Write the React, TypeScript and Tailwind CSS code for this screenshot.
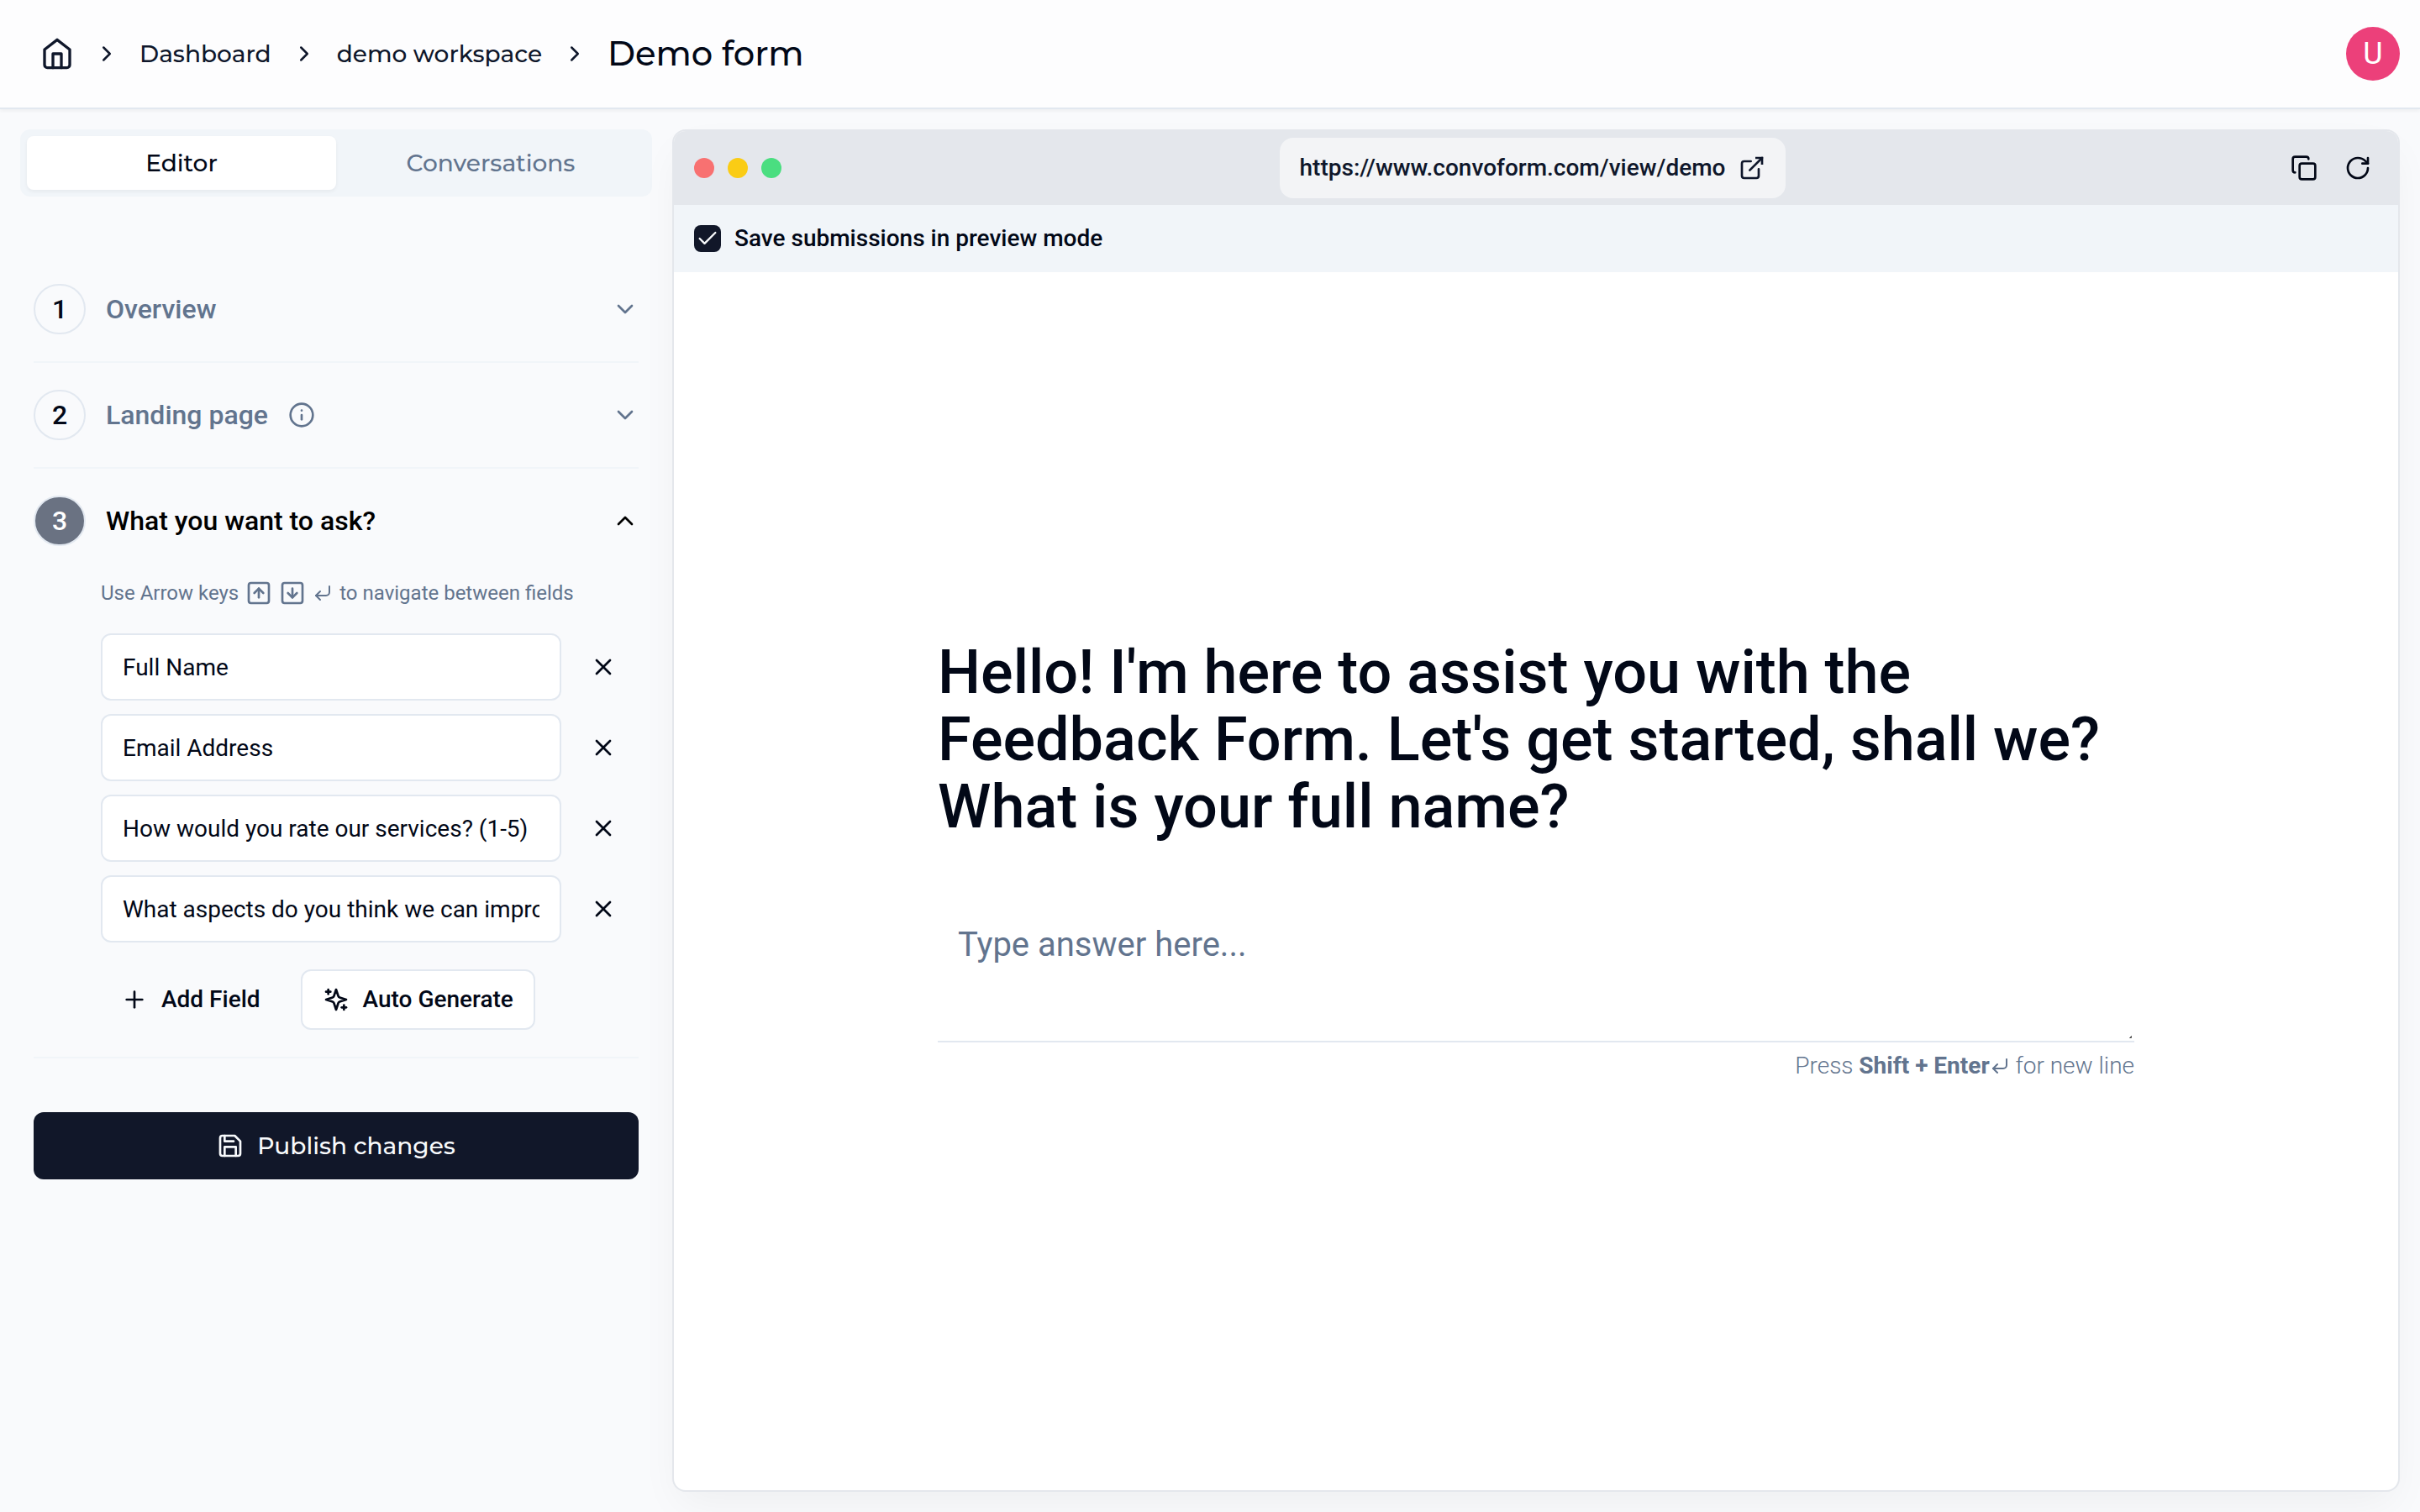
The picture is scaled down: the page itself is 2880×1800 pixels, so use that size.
import React, { useState } from "react";
import {
  ChevronDown,
  ChevronRight,
  ChevronUp,
  Check,
  Copy,
  CornerDownLeft,
  Info,
  Plus,
  RotateCw,
  SquareArrowDown,
  SquareArrowUp,
  X,
} from "lucide-react";

const display = "font-[Montserrat,Inter,sans-serif]";

function HomeIcon() {
  return (
    <svg viewBox="0 0 24 24" className="size-10" fill="none" stroke="currentColor" strokeWidth="2" strokeLinecap="round" strokeLinejoin="round" aria-hidden="true">
      <path d="m3 9 9-7 9 7v11a2 2 0 0 1-2 2H5a2 2 0 0 1-2-2z" />
      <polyline points="9 22 9 12 15 12 15 22" />
    </svg>
  );
}

function SparklesIcon() {
  return (
    <svg viewBox="0 0 24 24" className="size-8" fill="none" stroke="currentColor" strokeWidth="2" strokeLinecap="round" strokeLinejoin="round" aria-hidden="true">
      <path d="m12 3-1.912 5.813a2 2 0 0 1-1.275 1.275L3 12l5.813 1.912a2 2 0 0 1 1.275 1.275L12 21l1.912-5.813a2 2 0 0 1 1.275-1.275L21 12l-5.813-1.912a2 2 0 0 1-1.275-1.275L12 3Z" />
      <path d="M5 3v4" />
      <path d="M19 17v4" />
      <path d="M3 5h4" />
      <path d="M17 19h4" />
    </svg>
  );
}

function SaveIcon() {
  return (
    <svg viewBox="0 0 24 24" className="size-8" fill="none" stroke="currentColor" strokeWidth="2" strokeLinecap="round" strokeLinejoin="round" aria-hidden="true">
      <path d="M19 21H5a2 2 0 0 1-2-2V5a2 2 0 0 1 2-2h11l5 5v11a2 2 0 0 1-2 2z" />
      <polyline points="17 21 17 13 7 13 7 21" />
      <polyline points="7 3 7 8 15 8" />
    </svg>
  );
}

function OpenIcon() {
  return (
    <svg viewBox="0 0 24 24" className="size-8" fill="none" stroke="currentColor" strokeWidth="2" aria-hidden="true">
      <path d="M18 13v6a2 2 0 0 1-2 2H5a2 2 0 0 1-2-2V8a2 2 0 0 1 2-2h6" strokeLinecap="round" />
      <polyline points="15 3 21 3 21 9" />
      <path d="M10 14 21 3" strokeLinecap="round" />
    </svg>
  );
}

function Header() {
  return (
    <header className="relative flex h-[130px] shrink-0 items-center justify-between border-b-2 border-slate-200 bg-[#fdfdfe] pr-6 pl-12 shadow-[0_2px_4px_rgba(0,0,0,0.05)]">
      <nav aria-label="Breadcrumb" className={`flex items-center gap-6 text-[28px] leading-10 font-medium text-slate-900 ${display}`}>
        <a href="#home" aria-label="Home"><HomeIcon /></a>
        <ChevronRight className="size-[30px]" />
        <a href="#dashboard">Dashboard</a>
        <ChevronRight className="size-[30px]" />
        <a href="#workspace">demo workspace</a>
        <ChevronRight className="size-[30px]" />
        <h1 className="text-[40px] leading-14 text-[#020817]">Demo form</h1>
      </nav>
      <button aria-label="Account" className="flex size-16 items-center justify-center rounded-full bg-[#ec407a] text-[36px] leading-10 text-white">U</button>
    </header>
  );
}

function Step({ number, title, open, info, children }: { number: number; title: string; open?: boolean; info?: boolean; children?: React.ReactNode }) {
  return (
    <section className="border-b-2 border-slate-100">
      <button aria-expanded={!!open} className={`flex h-[124px] w-full items-center text-[32px] leading-12 font-medium ${open ? "text-black" : "text-slate-500"}`}>
        <span className={`mr-6 flex h-[60px] w-[62px] items-center justify-center rounded-full border-2 border-slate-200 ${open ? "bg-gray-500 text-white" : "text-[#020817]"}`}>{number}</span>
        <span>{title}</span>
        {info && <Info className="ml-6 size-8" />}
        <span className="flex-1" />
        {open ? <ChevronUp className="size-8" /> : <ChevronDown className="size-8" />}
      </button>
      {children}
    </section>
  );
}

function Editor() {
  const [fields, setFields] = useState([
    "Full Name",
    "Email Address",
    "How would you rate our services? (1-5)",
    "What aspects do you think we can improve?",
  ]);
  return (
    <aside className="w-[800px] shrink-0 px-6">
      <div role="tablist" className={`grid h-20 grid-cols-2 rounded-xl bg-slate-100 p-2 text-[28px] leading-10 font-medium ${display}`}>
        <button role="tab" aria-selected="true" className="rounded-lg bg-white text-[#020817] shadow-[0_2px_4px_rgba(0,0,0,0.05)]">Editor</button>
        <button role="tab" aria-selected="false" className="text-slate-500">Conversations</button>
      </div>
      <div className="px-4 pt-[72px]">
        <Step number={1} title="Overview" />
        <Step number={2} title="Landing page" info />
        <Step number={3} title="What you want to ask?" open>
          <div className="pb-8 pl-20">
            <p className="flex h-12 items-center gap-2 text-[24px] leading-8 text-slate-500">
              Use Arrow keys
              <SquareArrowUp className="size-8" />
              <SquareArrowDown className="size-8" />
              <CornerDownLeft className="size-6" />
              to navigate between fields
            </p>
            <ul className="flex flex-col gap-4 pt-6">
              {fields.map((value, i) => (
                <li key={i} className="flex gap-4 pr-2">
                  <input
                    aria-label={`Field ${i + 1}`}
                    value={value}
                    onChange={(e) => setFields(fields.map((f, j) => (j === i ? e.target.value : f)))}
                    className="h-20 min-w-0 flex-1 rounded-xl border-2 border-slate-200 bg-white px-6 text-[28px] leading-10 text-[#020817]"
                  />
                  <button aria-label={`Remove field ${i + 1}`} className="flex w-[68px] items-center justify-center text-[#020817]"><X className="size-8" /></button>
                </li>
              ))}
            </ul>
            <div className="flex gap-6 pt-8 text-[28px] leading-10 font-medium text-[#020817]">
              <button className="flex h-[72px] items-center gap-4 px-6"><Plus className="size-8" />Add Field</button>
              <button className="flex h-[72px] items-center gap-4 rounded-xl border-2 border-slate-200 bg-white px-6"><SparklesIcon />Auto Generate</button>
            </div>
          </div>
        </Step>
        <button className={`mt-16 flex h-20 w-full items-center justify-center gap-4 rounded-xl bg-[#111729] text-[28px] leading-10 font-medium text-slate-50 ${display}`}>
          <SaveIcon />
          Publish changes
        </button>
      </div>
    </aside>
  );
}

function Preview() {
  return (
    <main className="mr-6 mb-6 flex min-w-0 flex-1 flex-col overflow-hidden rounded-2xl border-2 border-[#e4e7ec] bg-white shadow-[0_20px_50px_-8px_rgba(0,0,0,0.05)]">
      <div className="flex h-[88px] shrink-0 items-center justify-between bg-[#e4e7ec] px-6">
        <div className="flex gap-4">
          <span className="size-6 rounded-full bg-[#f87171]" />
          <span className="size-6 rounded-full bg-[#facc15]" />
          <span className="size-6 rounded-full bg-[#4ade80]" />
        </div>
        <a href="#view" className="flex h-[72px] items-center gap-4 rounded-2xl bg-gray-100 px-6 text-[28px] leading-10 font-medium text-slate-900">
          https://www.convoform.com/view/demo
          <OpenIcon />
        </a>
        <div className="flex gap-4 text-[#020817]">
          <button aria-label="Copy link" className="p-2"><Copy className="size-8" /></button>
          <button aria-label="Reload" className="p-2"><RotateCw className="size-8" /></button>
        </div>
      </div>
      <div className="flex h-20 shrink-0 items-center bg-slate-100 px-6">
        <label className="flex items-center gap-4 text-[28px] leading-8 font-medium text-[#020817]">
          <span className="grid size-8">
            <input type="checkbox" defaultChecked className="col-start-1 row-start-1 size-8 appearance-none rounded-lg bg-[#111729]" />
            <Check className="pointer-events-none col-start-1 row-start-1 size-7 place-self-center text-slate-50" />
          </span>
          Save submissions in preview mode
        </label>
      </div>
      <div className="flex flex-1 flex-col justify-center px-24">
        <div className="mx-auto w-full max-w-[1424px]">
          <label htmlFor="answer" className="block text-[72px] leading-20 font-medium text-[#020817]">
            Hello! I'm here to assist you with the Feedback Form. Let's get started, shall we? What is your full name?
          </label>
          <div className="relative mt-20">
            <textarea id="answer" placeholder="Type answer here..." className="block h-40 w-full resize-none border-b-2 border-slate-200 px-6 py-4 text-[40px] leading-14 placeholder:text-slate-500" />
            <svg viewBox="0 0 4 4" className="absolute right-0.5 bottom-1 size-1" aria-hidden="true"><path d="M.5 2.5 2.5.5v2z" fill="#555" stroke="#555" /></svg>
          </div>
          <p className="flex items-center justify-end pt-2 pb-12 text-[28px] leading-10 font-light whitespace-pre text-slate-500">
            Press <b className="font-bold">Shift + Enter</b><CornerDownLeft className="size-6" /> for new line
          </p>
        </div>
      </div>
    </main>
  );
}

export default function App() {
  return (
    <div className="flex min-h-screen flex-col bg-[#f9fafc] font-[Roboto,sans-serif]">
      <Header />
      <div className="flex flex-1 pt-6">
        <Editor />
        <Preview />
      </div>
    </div>
  );
}
